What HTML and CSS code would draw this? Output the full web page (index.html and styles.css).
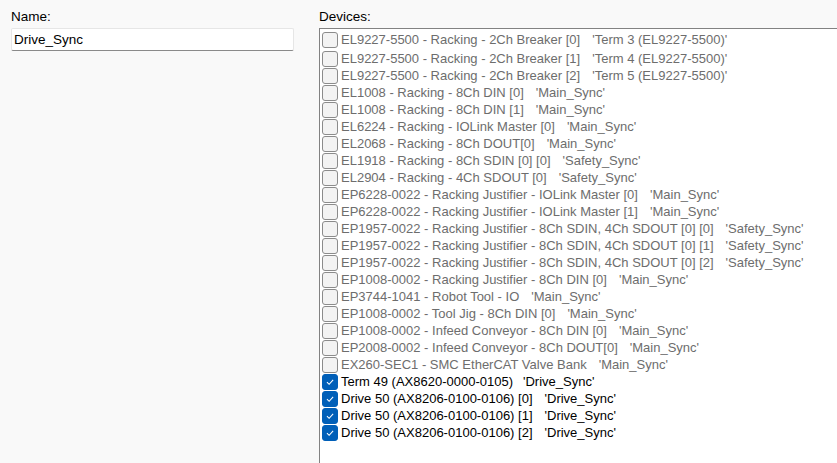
FILE: index.html
```html
<!DOCTYPE html>
<html lang="en">
<head>
  <meta charset="UTF-8">
  <title>Sync Unit</title>
  <link rel="stylesheet" href="styles.css">
</head>
<body>
  <div class="form">
    <div class="name-col">
      <label for="name">Name:</label>
      <input type="text" id="name" value="Drive_Sync">
    </div>
    <div class="devices-col">
      <label>Devices:</label>
      <ul class="device-list">
        <li class="item first"><span class="box"></span><span class="dev">EL9227-5500 - Racking - 2Ch Breaker [0]</span><span class="sync">'Term 3 (EL9227-5500)'</span></li>
        <li class="item"><span class="box"></span><span class="dev">EL9227-5500 - Racking - 2Ch Breaker [1]</span><span class="sync">'Term 4 (EL9227-5500)'</span></li>
        <li class="item"><span class="box"></span><span class="dev">EL9227-5500 - Racking - 2Ch Breaker [2]</span><span class="sync">'Term 5 (EL9227-5500)'</span></li>
        <li class="item"><span class="box"></span><span class="dev">EL1008 - Racking - 8Ch DIN [0]</span><span class="sync">'Main_Sync'</span></li>
        <li class="item"><span class="box"></span><span class="dev">EL1008 - Racking - 8Ch DIN [1]</span><span class="sync">'Main_Sync'</span></li>
        <li class="item"><span class="box"></span><span class="dev">EL6224 - Racking - IOLink Master [0]</span><span class="sync">'Main_Sync'</span></li>
        <li class="item"><span class="box"></span><span class="dev">EL2068 - Racking - 8Ch DOUT[0]</span><span class="sync">'Main_Sync'</span></li>
        <li class="item"><span class="box"></span><span class="dev">EL1918 - Racking - 8Ch SDIN [0] [0]</span><span class="sync">'Safety_Sync'</span></li>
        <li class="item"><span class="box"></span><span class="dev">EL2904 - Racking - 4Ch SDOUT [0]</span><span class="sync">'Safety_Sync'</span></li>
        <li class="item"><span class="box"></span><span class="dev">EP6228-0022 - Racking Justifier - IOLink Master [0]</span><span class="sync">'Main_Sync'</span></li>
        <li class="item"><span class="box"></span><span class="dev">EP6228-0022 - Racking Justifier - IOLink Master [1]</span><span class="sync">'Main_Sync'</span></li>
        <li class="item"><span class="box"></span><span class="dev">EP1957-0022 - Racking Justifier - 8Ch SDIN, 4Ch SDOUT [0] [0]</span><span class="sync">'Safety_Sync'</span></li>
        <li class="item"><span class="box"></span><span class="dev">EP1957-0022 - Racking Justifier - 8Ch SDIN, 4Ch SDOUT [0] [1]</span><span class="sync">'Safety_Sync'</span></li>
        <li class="item"><span class="box"></span><span class="dev">EP1957-0022 - Racking Justifier - 8Ch SDIN, 4Ch SDOUT [0] [2]</span><span class="sync">'Safety_Sync'</span></li>
        <li class="item"><span class="box"></span><span class="dev">EP1008-0002 - Racking Justifier - 8Ch DIN [0]</span><span class="sync">'Main_Sync'</span></li>
        <li class="item"><span class="box"></span><span class="dev">EP3744-1041 - Robot Tool - IO</span><span class="sync">'Main_Sync'</span></li>
        <li class="item"><span class="box"></span><span class="dev">EP1008-0002 - Tool Jig - 8Ch DIN [0]</span><span class="sync">'Main_Sync'</span></li>
        <li class="item"><span class="box"></span><span class="dev">EP1008-0002 - Infeed Conveyor - 8Ch DIN [0]</span><span class="sync">'Main_Sync'</span></li>
        <li class="item"><span class="box"></span><span class="dev">EP2008-0002 - Infeed Conveyor - 8Ch DOUT[0]</span><span class="sync">'Main_Sync'</span></li>
        <li class="item"><span class="box"></span><span class="dev">EX260-SEC1 - SMC EtherCAT Valve Bank</span><span class="sync">'Main_Sync'</span></li>
        <li class="item checked"><span class="box"><svg viewBox="0 0 16 16"><polyline points="4.5,8.2 7,10.6 11.6,5.6"/></svg></span><span class="dev">Term 49 (AX8620-0000-0105)</span><span class="sync wide">'Drive_Sync'</span></li>
        <li class="item checked"><span class="box"><svg viewBox="0 0 16 16"><polyline points="4.5,8.2 7,10.6 11.6,5.6"/></svg></span><span class="dev">Drive 50 (AX8206-0100-0106) [0]</span><span class="sync">'Drive_Sync'</span></li>
        <li class="item checked"><span class="box"><svg viewBox="0 0 16 16"><polyline points="4.5,8.2 7,10.6 11.6,5.6"/></svg></span><span class="dev">Drive 50 (AX8206-0100-0106) [1]</span><span class="sync">'Drive_Sync'</span></li>
        <li class="item checked"><span class="box"><svg viewBox="0 0 16 16"><polyline points="4.5,8.2 7,10.6 11.6,5.6"/></svg></span><span class="dev">Drive 50 (AX8206-0100-0106) [2]</span><span class="sync">'Drive_Sync'</span></li>
      </ul>
    </div>
  </div>
</body>
</html>
```

FILE: styles.css
```css
body {
  margin: 0;
  background: #f9f9f9;
  font-family: "Liberation Sans", Arial, sans-serif;
  font-size: 13.5px;
  color: #000;
  overflow: hidden;
}
.form {
  display: flex;
  padding: 9px 0 0 11px;
  gap: 25px;
}
.name-col {
  width: 283px;
  display: flex;
  flex-direction: column;
}
label {
  display: block;
  height: 19px;
  line-height: 16px;
  color: #000;
}
input[type="text"] {
  height: 23px;
  box-sizing: border-box;
  padding: 0 3px 0 2px;
  font-family: inherit;
  font-size: 13.5px;
  color: #000;
  background: #fff;
  border: 1px solid #e6e6e6;
  border-bottom-color: #8a8a8a;
  border-radius: 2px;
  outline: none;
}
.devices-col {
  flex: 1;
  margin-right: -6px;
}
.device-list {
  list-style: none;
  margin: 0;
  padding: 0 0 0 2px;
  height: 440px;
  background: #fff;
  border-top: 1px solid #828282;
  border-left: 1px solid #828282;
  font-size: 13px;
}
.item {
  display: flex;
  align-items: center;
  height: 17px;
  white-space: nowrap;
  color: #6d6d6d;
}
.item.first {
  margin-top: 2px;
  margin-bottom: 2px;
}
.item.checked {
  color: #000;
}
.box {
  width: 14px;
  height: 14px;
  flex: none;
  border: 1px solid #8b8b8b;
  border-radius: 3px;
  background: #f3f3f3;
  margin-right: 3px;
  display: flex;
}
.checked .box {
  background: #005fb8;
  border-color: #005fb8;
}
.box svg {
  width: 14px;
  height: 14px;
  fill: none;
  stroke: #fff;
  stroke-width: 1.2;
}
.sync {
  margin-left: 12px;
}
.sync.wide {
  margin-left: 10px;
}
```
